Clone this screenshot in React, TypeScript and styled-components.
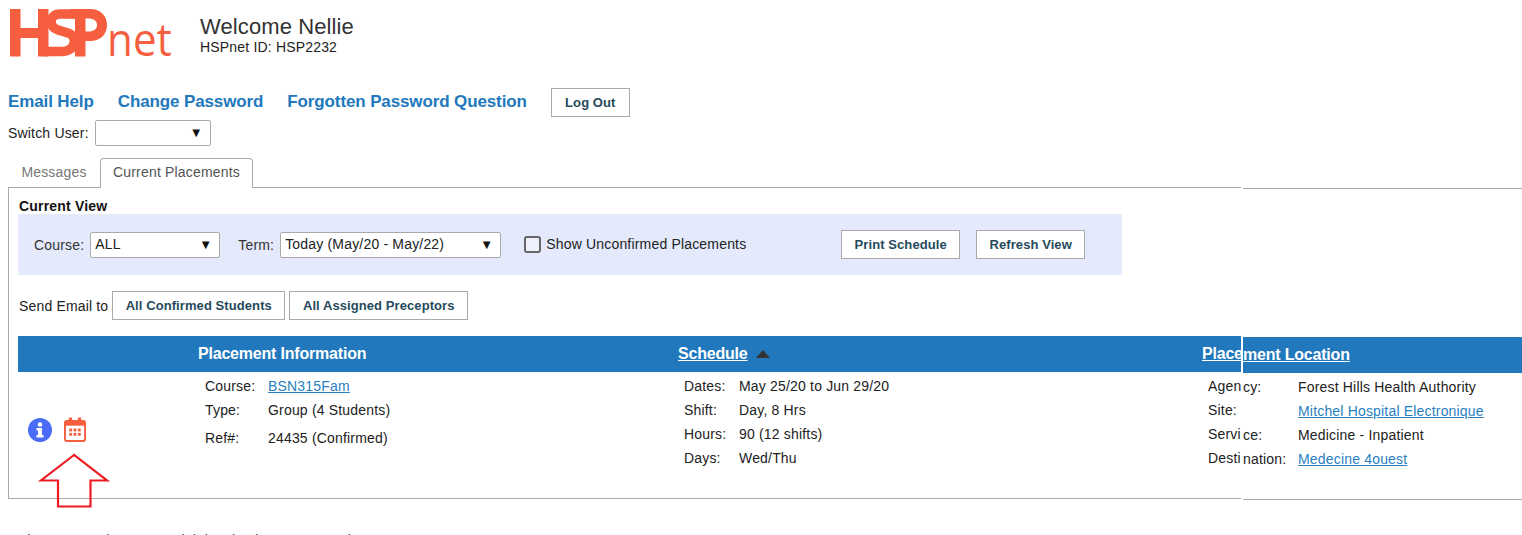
import React from "react";
import styled, { createGlobalStyle } from "styled-components";

const Global = createGlobalStyle`
  html, body { margin: 0; height: 100%; overflow: hidden; background: #fff; }
  body { font-family: "Liberation Sans", Arial, sans-serif; font-size: 14px; color: #222; letter-spacing: .18px; }
`;

const Page = styled.div`
  position: relative;
  width: 1522px;
  height: 535px;
  overflow: hidden;
`;

const Header = styled.header`
  display: flex;
  height: 88px;
  padding: 9px 0 0 10px;
  box-sizing: border-box;
`;

const Brand = styled.svg`
  width: 165px;
  height: 50px;
  flex: none;
`;

const Welcome = styled.div`
  margin: 5px 0 0 25px;
`;

const WelcomeTitle = styled.div`
  font-size: 22px;
  line-height: 25px;
  letter-spacing: .1px;
  color: #333;
`;

const WelcomeId = styled.div`
  font-size: 14px;
  line-height: 16px;
  color: #222;
`;

const LinkRow = styled.nav`
  display: flex;
  align-items: flex-start;
  padding-left: 8px;
  height: 32px;
`;

const NavLink = styled.a`
  font-size: 17px;
  font-weight: 700;
  line-height: 27px;
  letter-spacing: -.12px;
  color: #2278bc;
  margin-right: 24px;
`;

const Button = styled.button<{ $w: number; $h?: number }>`
  box-sizing: border-box;
  width: ${(p) => p.$w}px;
  height: ${(p) => p.$h ?? 29}px;
  padding: 0;
  background: #fff;
  border: 1px solid #aaa;
  font-family: inherit;
  font-size: 13px;
  font-weight: 700;
  letter-spacing: .08px;
  color: #264a5c;
  flex: none;
`;

const SwitchRow = styled.div`
  display: flex;
  align-items: center;
  height: 26px;
  padding-left: 8px;
  gap: 6px;
`;

const Select = styled.div<{ $w: number }>`
  box-sizing: border-box;
  width: ${(p) => p.$w}px;
  height: 26px;
  display: flex;
  align-items: center;
  justify-content: space-between;
  padding: 0 7px 1px 4px;
  background: #fff;
  border: 1px solid #aaa;
  border-radius: 2px;
  font-size: 14px;
  color: #222;
  flex: none;
`;

const Caret = styled.span`
  font-size: 13px;
  color: #111;
`;

const TabBar = styled.div`
  display: flex;
  height: 30px;
  margin: 12px 0 -1px 8px;
  position: relative;
  z-index: 1;
`;

const Tab = styled.div<{ $active?: boolean }>`
  box-sizing: border-box;
  display: flex;
  align-items: center;
  justify-content: center;
  width: ${(p) => (p.$active ? 153 : 92)}px;
  height: 30px;
  padding-bottom: 3px;
  font-size: 14px;
  color: ${(p) => (p.$active ? "#555" : "#777")};
  ${(p) =>
    p.$active
      ? "background: #fff; border: 1px solid #aaa; border-bottom: 0; border-radius: 4px 4px 0 0;"
      : "background: transparent;"}
`;

const PanelRow = styled.div`
  display: flex;
  padding-left: 8px;
  gap: 2px;
`;

const Panel = styled.section`
  box-sizing: border-box;
  width: 1233px;
  height: 312px;
  border: 1px solid #aaa;
  border-right: 0;
  padding: 0 0 0 9px;
  flex: none;
`;

const PanelTail = styled.section`
  box-sizing: border-box;
  flex: 1;
  margin-top: 1px;
  height: 312px;
  border: 1px solid #aaa;
  border-width: 1px 0;
`;

const ViewTitle = styled.div`
  font-size: 14px;
  font-weight: 700;
  line-height: 16px;
  padding: 10px 0 0 1px;
  color: #111;
  height: 26px;
  box-sizing: border-box;
`;

const Filter = styled.div`
  box-sizing: border-box;
  display: flex;
  align-items: center;
  width: 1104px;
  height: 61px;
  padding: 0 0 0 16px;
  margin-bottom: 16px;
  background: #e4eafc;
  font-size: 14px;
`;

const FilterLabel = styled.span<{ $lead?: number }>`
  color: #333;
  margin: 0 6px 0 ${(p) => p.$lead ?? 0}px;
`;

const Check = styled.span`
  box-sizing: border-box;
  display: block;
  width: 17px;
  height: 17px;
  margin: 0 5px 0 23px;
  border: 2px solid #666;
  border-radius: 3px;
  background: #eef1fb;
`;

const CheckText = styled.span`
  color: #222;
  font-size: 14px;
  width: 295px;
  padding-bottom: 2px;
`;

const FilterButtons = styled.div`
  display: flex;
  gap: 16px;
`;

const EmailRow = styled.div`
  display: flex;
  align-items: center;
  gap: 4px;
  height: 29px;
  margin-bottom: 16px;
  padding-left: 1px;
  letter-spacing: .16px;
  font-size: 14px;
  color: #222;
`;

const Band = styled.div`
  display: grid;
  grid-template-columns: 180px 480px 524px auto;
  align-items: center;
  height: 36px;
  background: #2278bc;
  font-size: 16px;
  font-weight: 700;
  letter-spacing: -.2px;
  color: #fff;
`;

const BandTail = styled.div`
  height: 36px;
  margin-top: 148px;
  display: flex;
  align-items: center;
  background: #2278bc;
  font-size: 16px;
  font-weight: 700;
  letter-spacing: -.2px;
  color: #fff;
  text-decoration: underline;
`;

const SortHead = styled.span`
  display: flex;
  align-items: center;
  gap: 8px;
`;

const Underlined = styled.span`
  text-decoration: underline;
`;

const Triangle = styled.span`
  width: 0;
  height: 0;
  border-left: 7px solid transparent;
  border-right: 7px solid transparent;
  border-bottom: 8px solid #333;
`;

const Details = styled.div`
  display: grid;
  grid-template-columns: 187px 479px 524px auto;
  padding-top: 2px;
`;

const Actions = styled.div`
  display: flex;
  align-items: center;
  gap: 12px;
  height: 26px;
  padding: 43px 0 0 10px;
`;

const InfoCol = styled.dl`
  margin: 0;
  display: grid;
  grid-template-columns: 63px auto;
  grid-auto-rows: 24px;
  align-items: center;
  align-content: start;
  font-size: 14px;
  color: #222;
`;

const CourseCol = styled(InfoCol)`
  grid-template-rows: 24px 24px 32px;
`;

const ScheduleCol = styled(InfoCol)`
  grid-template-columns: 55px auto;
`;

const LocationCol = styled(InfoCol)`
  grid-template-columns: 90px auto;
`;

const TailDetails = styled(InfoCol)`
  grid-template-columns: 55px auto;
  padding-top: 2px;
`;

const Term = styled.dt`
  color: #222;
`;

const Value = styled.dd`
  margin: 0;
  white-space: nowrap;
`;

const DataLink = styled.a`
  color: #2a7fc0;
  text-decoration: underline;
`;

const Arrow = styled.svg`
  position: absolute;
  left: 36px;
  top: 450px;
  width: 76px;
  height: 60px;
`;

const Footer = styled.div`
  padding: 32px 0 0 12px;
  font-size: 14px;
  line-height: 16px;
  white-space: nowrap;
  color: #333;
`;

const Logo = () => (
  <Brand viewBox="10 9 165 50" aria-label="HSPnet">
    <g fill="#f55f3f">
      <rect x="10" y="9" width="10.5" height="47.5" />
      <rect x="10" y="28" width="33" height="10" />
      <rect x="38" y="9" width="10.5" height="47.5" />
      <rect x="75" y="9" width="10.5" height="47.5" />
      <path d="M70 9h20c11 0 17 7 17 16s-6 16-17 16h-9v-9.500h7c6 0 9-2.500 9-6.500s-3-6.500-9-6.500H70z" />
    </g>
    <path
      d="M80 14H60C49 14 48 27 58 30L68 33C78 36 76 51.500 62 51.500H44"
      fill="none"
      stroke="#f55f3f"
      strokeWidth="9.500"
    />
    <text
      x="107"
      y="56"
      fontFamily="'Open Sans', sans-serif"
      fontSize="46"
      fontWeight="400"
      fill="#f55f3f"
      textLength="65"
      lengthAdjust="spacingAndGlyphs"
    >
      net
    </text>
  </Brand>
);

const InfoIcon = () => (
  <svg width="24" height="24" viewBox="0 0 24 24">
    <circle cx="12" cy="12" r="12" fill="#4a6cf7" />
    <circle cx="12" cy="6.500" r="2.300" fill="#fff" />
    <path d="M8.500 10h5.500v7h1.500v2.500h-7V17H10v-4.500H8.500z" fill="#fff" />
  </svg>
);

const CalendarIcon = () => (
  <svg width="22" height="26" viewBox="0 0 23 26">
    <rect x="5" y="0" width="3.500" height="6" fill="#f55f3f" />
    <rect x="14.500" y="0" width="3.500" height="6" fill="#f55f3f" />
    <rect x="1" y="3.500" width="21" height="21" rx="2" fill="#fff" stroke="#f55f3f" strokeWidth="2" />
    <rect x="1" y="3.500" width="21" height="5" fill="#f55f3f" />
    {[5.5, 10, 14.5].flatMap((x) =>
      [11.5, 16].map((y) => <rect key={`${x}-${y}`} x={x} y={y} width="3" height="3" fill="#f55f3f" />)
    )}
  </svg>
);

export default function App() {
  return (
    <Page>
      <Global />
      <Header>
        <Logo />
        <Welcome>
          <WelcomeTitle>Welcome Nellie</WelcomeTitle>
          <WelcomeId>HSPnet ID: HSP2232</WelcomeId>
        </Welcome>
      </Header>
      <LinkRow>
        <NavLink>Email Help</NavLink>
        <NavLink>Change Password</NavLink>
        <NavLink>Forgotten Password Question</NavLink>
        <Button $w={79}>Log Out</Button>
      </LinkRow>
      <SwitchRow>
        Switch User:
        <Select $w={116}>
          <span />
          <Caret>▼</Caret>
        </Select>
      </SwitchRow>
      <TabBar>
        <Tab>Messages</Tab>
        <Tab $active>Current Placements</Tab>
      </TabBar>
      <PanelRow>
        <Panel>
          <ViewTitle>Current View</ViewTitle>
          <Filter>
            <FilterLabel>Course:</FilterLabel>
            <Select $w={130}>
              ALL
              <Caret>▼</Caret>
            </Select>
            <FilterLabel $lead={18}>Term:</FilterLabel>
            <Select $w={221}>
              Today (May/20 - May/22)
              <Caret>▼</Caret>
            </Select>
            <Check />
            <CheckText>Show Unconfirmed Placements</CheckText>
            <FilterButtons>
              <Button $w={119}>Print Schedule</Button>
              <Button $w={109}>Refresh View</Button>
            </FilterButtons>
          </Filter>
          <EmailRow>
            Send Email to
            <Button $w={173}>All Confirmed Students</Button>
            <Button $w={179}>All Assigned Preceptors</Button>
          </EmailRow>
          <Band>
            <span />
            <span>Placement Information</span>
            <SortHead>
              <Underlined>Schedule</Underlined>
              <Triangle />
            </SortHead>
            <Underlined>Place</Underlined>
          </Band>
          <Details>
            <Actions>
              <InfoIcon />
              <CalendarIcon />
            </Actions>
            <CourseCol>
              <Term>Course:</Term>
              <Value>
                <DataLink>BSN315Fam</DataLink>
              </Value>
              <Term>Type:</Term>
              <Value>Group (4 Students)</Value>
              <Term>Ref#:</Term>
              <Value>24435 (Confirmed)</Value>
            </CourseCol>
            <ScheduleCol>
              <Term>Dates:</Term>
              <Value>May 25/20 to Jun 29/20</Value>
              <Term>Shift:</Term>
              <Value>Day, 8 Hrs</Value>
              <Term>Hours:</Term>
              <Value>90 (12 shifts)</Value>
              <Term>Days:</Term>
              <Value>Wed/Thu</Value>
            </ScheduleCol>
            <LocationCol>
              <Term>Agen</Term>
              <span />
              <Term>Site:</Term>
              <span />
              <Term>Servi</Term>
              <span />
              <Term>Desti</Term>
              <span />
            </LocationCol>
          </Details>
        </Panel>
        <PanelTail>
          <BandTail>ment Location</BandTail>
          <TailDetails>
            <Term>cy:</Term>
            <Value>Forest Hills Health Authority</Value>
            <span />
            <Value>
              <DataLink>Mitchel Hospital Electronique</DataLink>
            </Value>
            <Term>ce:</Term>
            <Value>Medicine - Inpatient</Value>
            <Term>nation:</Term>
            <Value>
              <DataLink>Medecine 4ouest</DataLink>
            </Value>
          </TailDetails>
        </PanelTail>
      </PanelRow>
      <Footer>Other courses in RN04 - Nightingale placement Number 1 G18</Footer>
      <Arrow viewBox="36 450 76 60">
        <path d="M74 455L41 480.500H58V506.500H90.500V480.500H107Z" fill="none" stroke="#ed1c24" strokeWidth="2.200" />
      </Arrow>
    </Page>
  );
}
